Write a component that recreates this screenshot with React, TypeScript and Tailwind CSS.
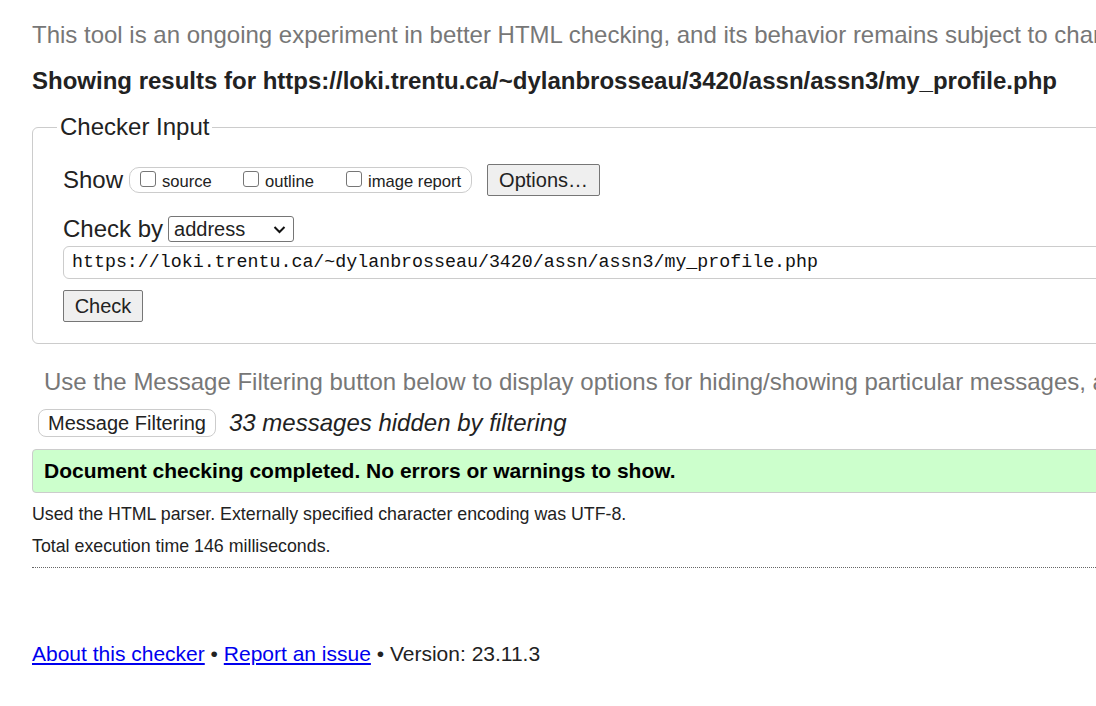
import React from "react";

const font = { fontFamily: '"Liberation Sans", Arial, sans-serif' };

function Box() {
  return (
    <span className="inline-block w-[16px] h-[16px] border border-[#767676] rounded-[3px] bg-white mr-[6px] mb-[5px] shrink-0" />
  );
}

export default function App() {
  return (
    <div className="w-[1096px] h-[706px] overflow-hidden bg-white text-[#222]" style={font}>
      <div className="w-[1600px] pl-[32px]">
        <p className="pt-[20px] text-[24px] leading-[30px] text-[#777] whitespace-nowrap">
          This tool is an ongoing experiment in better HTML checking, and its behavior remains subject to change
        </p>
        <p className="mt-[16px] text-[24px] leading-[30px] font-bold text-[#222] whitespace-nowrap">
          Showing results for https://loki.trentu.ca/~dylanbrosseau/3420/assn/assn3/my_profile.php
        </p>
        <div className="relative mt-[31px] border border-[#ccc] rounded-[6px] h-[217px] pl-[30px]">
          <div className="absolute left-[24px] top-[-16px] bg-white px-[3px] text-[24px] leading-[30px]">Checker Input</div>
          <div className="pt-[36px] flex items-center">
            <span className="text-[24px] leading-[30px] mr-[6px]">Show</span>
            <div className="flex items-center h-[26px] w-[343px] border border-[#ccc] rounded-[10px] pl-[10px] text-[16.6px] leading-[20px]">
              <label className="flex items-end w-[103px] pt-[2px]"><Box />source</label>
              <label className="flex items-end w-[103px] pt-[2px]"><Box />outline</label>
              <label className="flex items-end pt-[2px]"><Box />image report</label>
            </div>
            <button className="ml-[15px] h-[32px] w-[113px] border border-[#767676] rounded-[2px] bg-[#efefef] text-[20px] leading-[24px]">Options…</button>
          </div>
          <div className="mt-[18px] flex items-center">
            <span className="text-[24px] leading-[30px] mr-[5px]">Check by</span>
            <div className="flex items-center justify-between h-[26px] w-[126px] border border-[#767676] rounded-[3px] pl-[5px] pr-[7px] text-[20px]">
              <span>address</span>
              <svg width="13" height="9" viewBox="0 0 13 9"><path d="M1.5 2 L6.5 7 L11.5 2" fill="none" stroke="#111" strokeWidth="2" /></svg>
            </div>
          </div>
          <div className="mt-[2px] h-[33px] border border-[#ccc] rounded-[6px] flex items-center pl-[8px] text-[18.3px] text-[#111]" style={{ fontFamily: '"Liberation Mono", monospace' }}>
            https://loki.trentu.ca/~dylanbrosseau/3420/assn/assn3/my_profile.php
          </div>
          <button className="mt-[11px] h-[32px] w-[80px] border border-[#767676] rounded-[2px] bg-[#efefef] text-[20px] leading-[24px]">Check</button>
        </div>
        <p className="mt-[23px] ml-[12px] text-[24px] leading-[30px] text-[#777] whitespace-nowrap">
          Use the Message Filtering button below to display options for hiding/showing particular messages, and to see total counts of errors and warnings.
        </p>
        <div className="mt-[11px] ml-[6px] flex items-center">
          <button className="h-[28px] w-[178px] border border-[#ccc] rounded-[8px] bg-white text-[20px] leading-[24px]">Message Filtering</button>
          <span className="ml-[13px] italic text-[24px] leading-[30px]">33 messages hidden by filtering</span>
        </div>
        <div className="mt-[11px] h-[44px] border border-[#ccc] rounded-[4px] bg-[#ccffcc] flex items-center pl-[11px] font-bold text-[21px] text-black">
          Document checking completed. No errors or warnings to show.
        </div>
        <p className="mt-[10px] text-[17.8px] leading-[22px]">Used the HTML parser. Externally specified character encoding was UTF-8.</p>
        <p className="mt-[10px] text-[17.8px] leading-[22px]">Total execution time 146 milliseconds.</p>
        <div className="mt-[10px] w-[1064px] border-t border-dotted border-[#666]" />
        <p className="mt-[72px] text-[21px] leading-[28px]">
          <a href="#" className="text-[#0000ee] underline">About this checker</a> • <a href="#" className="text-[#0000ee] underline">Report an issue</a> • Version: 23.11.3
        </p>
      </div>
    </div>
  );
}
